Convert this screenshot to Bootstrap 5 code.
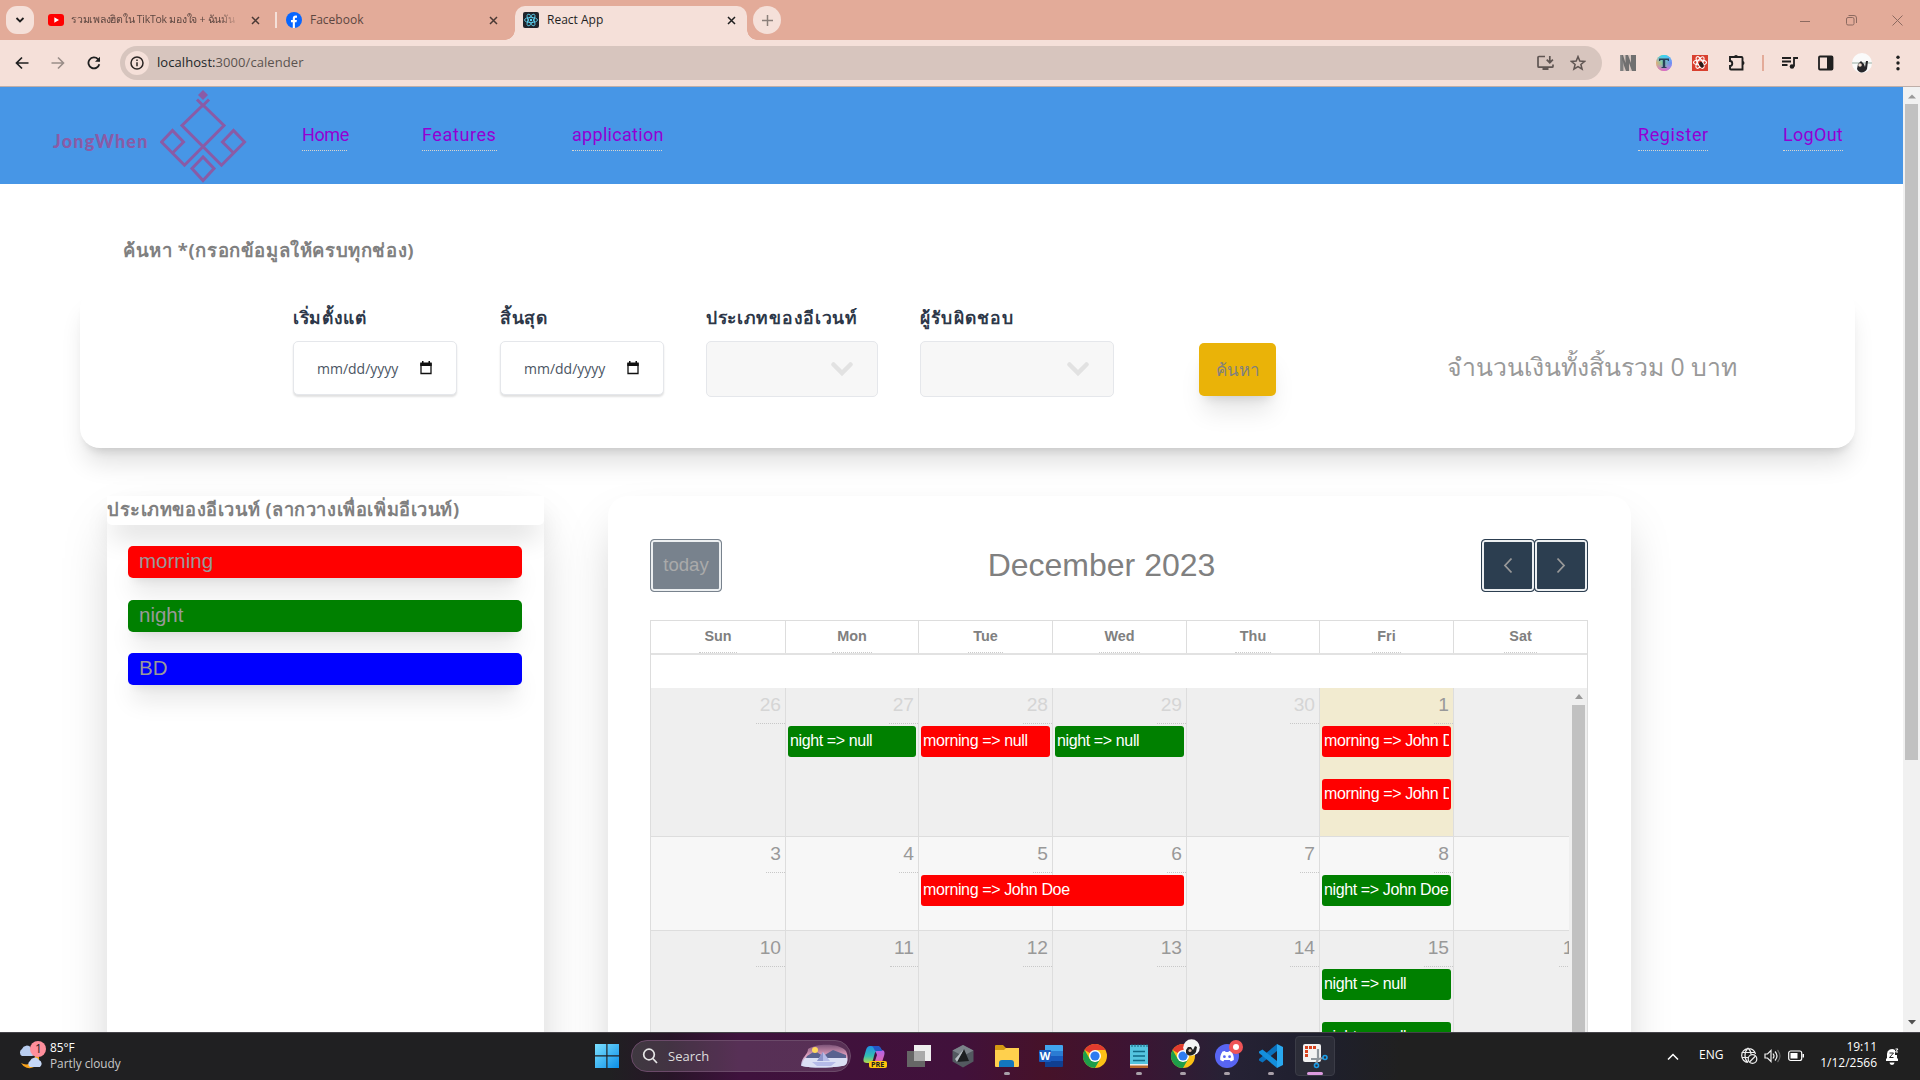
<!DOCTYPE html>
<html lang="th">
<head>
<meta charset="utf-8">
<title>React App</title>
<meta name="viewport" content="width=device-width, initial-scale=1">
<link href="https://cdn.jsdelivr.net/npm/bootstrap@5.3.0/dist/css/bootstrap.min.css" rel="stylesheet">
<style>
:root{--ui:"Open Sans","Noto Sans",sans-serif;--arial:"Liberation Sans",sans-serif}
html,body{height:1080px;overflow:hidden}
body{width:1920px;font-family:var(--ui);color:#808080;background:#fff}
svg{display:block;flex:none}
/* browser frame */
.tabstrip{height:40px;background:#e3ab99;font-size:12px;color:#5c4640}
.tab-menu,.tab-plus{width:28px;height:28px;border-radius:11px;background:#f5e0d9}
.tab-plus{border-radius:14px;margin-left:6px}
.tab-menu{margin-left:6px}
.tab-item{height:34px;white-space:nowrap}
.tab-one{width:241px;padding-left:14px}
.tab-one span{width:168px;overflow:hidden;margin-left:7px;font-size:10.5px;letter-spacing:-.25px;-webkit-mask-image:linear-gradient(90deg,#000 88%,transparent)}
.tab-two{width:240px;padding-left:9px;border-left:2px solid #f5e0d9;height:16px}
.tab-live{width:232px;height:34px;padding:0 11px 6px 8px;border-radius:10px 10px 0 0;background:#f5e0d9;color:#1f1f1f;margin-top:6px;position:relative}
.tab-live:before,.tab-live:after{content:"";position:absolute;bottom:0;width:10px;height:10px}
.tab-live:before{left:-10px;background:radial-gradient(circle at 0 0,transparent 9.5px,#f5e0d9 10px)}
.tab-live:after{right:-10px;background:radial-gradient(circle at 100% 0,transparent 9.5px,#f5e0d9 10px)}
.win-ctl{gap:35px;margin-right:17px}
.toolbar{height:47px;background:#f5e0d9;border-bottom:1px solid #bfaea8;padding:0 15px}
.omnibox{width:1482px;height:34px;border-radius:17px;background:#d7c5be;margin-left:19px;font-size:13px;color:#5b534f;padding:0 16px 0 5px}
.site-info{width:24px;height:24px;border-radius:12px;background:#f5e0d9}
.tool-gap{gap:20px;margin-left:18px}
/* application */
.viewport-area{height:945px;overflow:hidden}
.page-area{width:1903px;height:945px;overflow:hidden}
.topnav{height:97px;background:#4796e6;padding:0 60px 0 53px;font-family:"Roboto",sans-serif}
.brand-name{font:900 18px "Lato",sans-serif;letter-spacing:1.2px;color:#8a5ba6;width:107px;padding-top:11px}
.topnav a{color:#9400d3;text-decoration:none;font-size:18px;line-height:24px;letter-spacing:.6px;border-bottom:1px dotted #d9d6cf;padding-bottom:3px;margin-top:3px;white-space:nowrap}
.topnav .nav-tight{letter-spacing:-.4px}.topnav .nav-mid{letter-spacing:.3px}
.find-title{font-weight:700;font-size:18.5px;letter-spacing:.6px;line-height:26px;margin:53px 0 0 123px}
.find-card{width:1775px;height:159px;margin:26px 0 0 80px;border-radius:20px;background:#fff;padding:14px 0 0 213px;box-shadow:0 20px 25px -5px rgba(0,0,0,.12),0 8px 10px -6px rgba(0,0,0,.14)}
.find-label{color:#2d3748;font-weight:600;font-size:17.5px;letter-spacing:.7px;line-height:28px;margin-bottom:10px;white-space:nowrap}
.date-box{width:164px;height:54px;border:1px solid #e5e7eb;border-radius:5px;background:#fff;color:#4b5563;font-size:14px;padding:0 24px 0 23px;box-shadow:0 2px 2px rgba(0,0,0,.12)}
.pick-box{height:56px;border:1px solid #e5e7eb;border-radius:5px;background:#f7f7f7;padding-right:24px}
.find-btn{width:77px;height:53px;border-radius:5px;background:#eab308;color:#808080;font-size:17px;margin:40px 0 0 85px;padding:0;border:0;box-shadow:0 20px 25px -5px rgba(0,0,0,.1),0 8px 10px -6px rgba(0,0,0,.12)}
.find-total{font-size:24.8px;color:#999;margin:43px 0 0 171px;line-height:40px;white-space:nowrap}
.lower{margin:48px 0 0 107px;gap:64px}
.soft{box-shadow:0 25px 50px -12px rgba(0,0,0,.25)}
.kind-panel{width:437px;height:760px;background:#fff}
.kind-head{height:29px;border-radius:0 0 5px 5px;background:#fff;font-weight:700;font-size:18.2px;letter-spacing:.58px;line-height:27px;white-space:nowrap;box-shadow:0 16px 28px -6px rgba(0,0,0,.18)}
.kind-list{padding:21px 22px 0 21px}
.kind-item{height:32px;margin-bottom:21.6px;border-radius:5px;padding-left:11px;font:20.5px/29px var(--arial);color:#999;box-shadow:0 20px 25px -5px rgba(0,0,0,.1),0 8px 10px -6px rgba(0,0,0,.1)}
.bg-red{background:red}.bg-green{background:green}.bg-blue{background:blue}
.cal-card{width:1023px;height:900px;background:#fff;border-radius:20px;padding:43px 43px 0 42px;font-family:var(--arial)}
.cal-btn{height:53px;border:1px solid #2c3e50;border-radius:4px;background:#2c3e50;box-shadow:inset 0 0 0 2px #eceff1;width:54px}
.cal-btn.faded{width:72px;background:#78828d;border-color:#78828d;color:#aaa;font-size:18.6px;padding-bottom:2px}
.cal-title{font-size:32px;line-height:38px;color:#808080;padding-bottom:2px}
.cal-frame{margin-top:28px;border:1px solid #ddd;height:800px;width:938px}
.cal-row{display:grid;grid-template-columns:135px 133px 134px 134px 133px 134px 133px}
.cal-head{height:34px;border-bottom:2px solid #e2e2e2;font-weight:700;font-size:14.4px;text-align:center}
.cal-head>div{border-right:1px solid #ddd;height:32px}
.cal-head>div:last-child{border:0}
.cal-head span{display:inline-block;padding:0 5px;height:32px;line-height:31px;border-bottom:1px dotted #ccc}
.cal-body{width:919px;margin-top:33px;overflow:hidden}
.week{grid-template-columns:135px 133px 134px 134px 133px 134px 134px;width:937px;border-bottom:1px solid #ddd;background:#efefef}
.week-a{height:149px}.week-b{height:94px;background:#f7f7f7}.week-c{height:150px}
.day{border-right:1px solid #ddd;padding:0 2px;font-size:19.2px;line-height:22px;color:#999;min-width:0}
.day:last-child{border:0}
.day b{font-weight:400;display:block;width:fit-content;margin:0 -2px 2px auto;padding:6px 4px 7px;border-bottom:1px dotted #c8c8c8}
.day.out b{color:#d5d5d5}
.day.now{background:#f2ebd0}
.ev{height:31px;border-radius:3px;border:0 solid transparent;border-width:0 2px;margin-bottom:22px;color:#fff;font-size:16px;line-height:29px;letter-spacing:-.38px;white-space:nowrap;overflow:hidden}
.ev-wide{width:263px;position:relative}
.scroll-in{width:18px;background:#efefef;height:700px;margin-top:33px;padding:6px 2px 0 3px}
.scroll-in i{display:block;height:690px;background:#c1c1c1;margin-top:6px}
.scroll-out{width:17px;background:#f1f1f1;padding:7px 2px;height:945px}
.scroll-out i{height:656px;background:#c1c1c1;margin-top:5px;width:13px}
/* taskbar */
.taskbar{height:48px;border-top:1px solid #454349;padding-bottom:1px;color:#fff;font-size:12px;line-height:16px;background:linear-gradient(90deg,#202022 0,#202022 610px,#281528 670px,#3f123d 740px,#41113b 960px,#461229 1045px,#3d1433 1130px,#262235 1230px,#1e1f2d 1320px,#202020 1400px)}
.search-pill{width:220px;height:32px;border-radius:16px;border:1px solid #6b4a69;background:rgba(255,255,255,.13);margin-left:12px;font-size:13.5px;color:#ddd;padding:0 2px 0 10px}
.task-slot{width:40px;height:40px;margin-right:4px;border-radius:4px;padding-top:8px}
.task-slot.live{background:#2c2d38;border:1px solid #3b3c47;padding-top:7px}
.task-slot u{width:6px;height:3px;border-radius:2px;background:#a9a0a9;margin-top:4px}
.task-slot.live u{width:16px;background:#dc9be0}
.weather-text{margin-left:2px;font-size:11.8px;padding-bottom:2px}
.tray span,.tray .clock{padding-bottom:2px}
</style>
</head>
<body>
<header>
<div class="tabstrip d-flex align-items-center">
  <div class="tab-menu d-flex align-items-center justify-content-center"><svg width="10" height="10" viewBox="0 0 10 10"><path d="M1.500 3 5 6.500 8.500 3" fill="none" stroke="#1f1f1f" stroke-width="1.800"/></svg></div>
  <div class="tab-item tab-one d-flex align-items-center"><svg width="16" height="16" viewBox="0 0 16 16"><rect y="2" width="16" height="12" rx="3" fill="#f00"/><path d="M6.300 5.300v5.400L11 8z" fill="#fff"/></svg><span>รวมเพลงฮิตใน TikTok มองใจ + ฉันมัน</span><svg style="margin-left:12px" width="9" height="9" viewBox="0 0 9 9" stroke="#4a3935" stroke-width="1.500"><path d="M1 1l7 7M8 1 1 8"/></svg></div>
  <div class="tab-two d-flex align-items-center"><svg width="16" height="16" viewBox="0 0 16 16"><circle cx="8" cy="8" r="8" fill="#0866ff"/><path d="M6.800 16v-5.700H5V8h1.800V6.500c0-2 1-3 2.900-3 .5 0 1 .1 1.300.2v2h-.9c-.9 0-1.200.4-1.200 1.200V8h2l-.4 2.300H8.900V16z" fill="#fff"/></svg><span class="ms-2 flex-grow-1">Facebook</span><svg style="margin-right:17px" width="9" height="9" viewBox="0 0 9 9" stroke="#4a3935" stroke-width="1.500"><path d="M1 1l7 7M8 1 1 8"/></svg></div>
  <div class="tab-live d-flex align-items-center"><svg width="16" height="16" viewBox="0 0 16 16"><rect width="16" height="16" rx="2" fill="#20232a"/><g fill="none" stroke="#61dafb" stroke-width=".8"><ellipse cx="8" cy="8" rx="6.500" ry="2.600"/><ellipse cx="8" cy="8" rx="6.500" ry="2.600" transform="rotate(60 8 8)"/><ellipse cx="8" cy="8" rx="6.500" ry="2.600" transform="rotate(120 8 8)"/></g><circle cx="8" cy="8" r="1.200" fill="#61dafb"/></svg><span class="ms-2 flex-grow-1">React App</span><svg width="9" height="9" viewBox="0 0 9 9" stroke="#1f1f1f" stroke-width="1.500"><path d="M1 1l7 7M8 1 1 8"/></svg></div>
  <div class="tab-plus d-flex align-items-center justify-content-center"><svg width="11" height="11" viewBox="0 0 11 11" stroke="#8b7f7a" stroke-width="1.500"><path d="M5.500 0v11M0 5.500h11"/></svg></div>
  <div class="win-ctl d-flex align-items-center ms-auto"><svg width="11" height="11" stroke="#8c6a60"><path d="M0 6.500h10"/></svg><svg width="11" height="11" fill="none" stroke="#8c6a60"><rect x=".5" y="2.500" width="7.500" height="7.500" rx="1.500"/><path d="M2.500 .5H8a2.500 2.500 0 0 1 2.500 2.500v5"/></svg><svg width="11" height="11" stroke="#8c6a60"><path d="M.5.5l10 10M10.500.5l-10 10"/></svg></div>
</div>
<div class="toolbar d-flex align-items-center">
  <svg width="14" height="14" viewBox="0 0 14 14" fill="none" stroke="#1f1f1f" stroke-width="1.700"><path d="M13.500 7H1.500M7 1.500 1.500 7 7 12.500"/></svg>
  <svg style="margin-left:22px" width="14" height="14" viewBox="0 0 14 14" fill="none" stroke="#998d88" stroke-width="1.600"><path d="M.5 7h12M7 1.500 12.500 7 7 12.500"/></svg>
  <svg style="margin-left:22px" width="14" height="14" viewBox="0 0 14 14" fill="none" stroke="#1f1f1f" stroke-width="1.800"><path d="M12.300 8.200A5.500 5.500 0 1 1 11 3.200L12.500 5"/><path d="M13 .8v5H8z" fill="#1f1f1f" stroke="none"/></svg>
  <div class="omnibox d-flex align-items-center">
    <div class="site-info d-flex align-items-center justify-content-center"><svg width="14" height="14" viewBox="0 0 14 14" fill="none" stroke="#2b2523" stroke-width="1.500"><circle cx="7" cy="7" r="6"/><path d="M7 6.200v4M7 3.500V5"/></svg></div>
    <span class="ms-2 flex-grow-1" style="letter-spacing:.07px"><span class="text-dark">localhost:</span>3000/calender</span>
    <svg class="me-3" width="17" height="16" viewBox="0 0 17 16" fill="none" stroke="#5f5552" stroke-width="1.700"><path d="M8 1.500H2a1 1 0 0 0-1 1v8.700a1 1 0 0 0 1 1h13a1 1 0 0 0 1-1V9.500M12.800 1v6.500M9.700 4.700l3.100 3 3.100-3"/><path d="M5.500 12.500h6V15h-6z" fill="#5f5552" stroke="none"/></svg>
    <svg width="16" height="16" viewBox="0 0 16 16" fill="none" stroke="#5f5552" stroke-width="1.500"><path d="m8 1.600 1.800 4.500 4.800.3-3.700 3.100 1.200 4.700L8 11.600l-4.100 2.600 1.200-4.700L1.400 6.400l4.800-.3z"/></svg>
  </div>
  <div class="tool-gap d-flex align-items-center">
    <svg width="16" height="16" viewBox="0 0 16 16"><path d="M0 0h16v16H0z" fill="#d5c6c0"/><path d="M0 0h3l2.500 8V0H8l3 8V0h5v16h-4L9 8v8H6L3 8v8H0z" fill="#707070"/><path d="M0 0h1.500v16H0zM2.500 5l1 3v8h-1z" fill="#8d8d8d"/></svg>
    <svg width="16" height="16" viewBox="0 0 16 16"><defs><linearGradient id="hueA"><stop stop-color="#ffb238"/><stop offset=".4" stop-color="#6de06a"/><stop offset="1" stop-color="#4d7bff"/></linearGradient><linearGradient id="hueB" x1="0" y1="0" x2="0" y2="1"><stop stop-color="#28d7ff"/><stop offset=".5" stop-color="#a8a0ff" stop-opacity=".3"/><stop offset="1" stop-color="#f45ac8"/></linearGradient></defs><circle cx="8" cy="8" r="8" fill="url(#hueA)"/><circle cx="8" cy="8" r="8" fill="url(#hueB)"/><path d="M3 3.500h10V6h-1l-.5-1H9.200v7h1.300v1h-5v-1h1.300V5H4.500L4 6H3z" fill="#28405a"/></svg>
    <svg width="16" height="16" viewBox="0 0 16 16"><path fill="#d9402f" d="M0 0h16v16H0z"/><g fill="none" stroke="#fff" stroke-width="1.100"><ellipse cx="8" cy="7.500" rx="6.500" ry="2.500"/><ellipse cx="8" cy="7.500" rx="6.500" ry="2.500" transform="rotate(60 8 7.500)"/><ellipse cx="8" cy="7.500" rx="6.500" ry="2.500" transform="rotate(120 8 7.500)"/></g><ellipse cx="9.500" cy="10" rx="2" ry="3" fill="#2b1a18" transform="rotate(-30 9 10)"/></svg>
    <svg width="17" height="16" viewBox="0 0 17 16" fill="none" stroke="#1f1f1f" stroke-width="1.900"><path d="M2 2h11.500a1 1 0 0 1 1 1v11.500H3a1 1 0 0 1-1-1V11c3 0 3-5 0-5V3z"/><path d="M6 2a2 2 0 0 1 4 0zM14.500 6a2 2 0 0 1 0 4z" fill="#1f1f1f" stroke="none"/></svg>
    <i style="width:2px;height:16px;background:#e3ab99;margin-left:-3px"></i>
    <svg style="margin-left:-2px" width="17" height="16" viewBox="0 0 17 16" fill="none" stroke="#1f1f1f" stroke-width="1.800"><path d="M0 3h9M0 6.500h9M0 10h5.500M16 3h-4v8.500"/><circle cx="10" cy="11.500" r="2.300" fill="#1f1f1f" stroke="none"/></svg>
    <svg style="margin-left:-1px" width="16" height="16" viewBox="0 0 16 16"><rect x="1" y="1.500" width="13.500" height="13" rx="1" fill="none" stroke="#1f1f1f" stroke-width="1.800"/><path d="M9 1h5.500v14H9z" fill="#1f1f1f"/></svg>
    <svg style="margin-left:-2px" width="20" height="20" viewBox="0 0 20 20"><circle cx="10" cy="10" r="10" fill="#fafafa"/><path d="M0 9h20v2H0z" fill="#c9d3cd"/><path d="M5 16l1-5 3-3 3 3 1 3 1-6h2l-1 8c-2 4-8 5-10 0z" fill="#26262a"/><circle cx="8" cy="12" r="1.800" fill="#f0ddd0"/></svg>
    <svg style="margin-left:4px" width="4" height="16" fill="#1f1f1f"><circle cx="2" cy="2.200" r="1.700"/><circle cx="2" cy="8" r="1.700"/><circle cx="2" cy="13.800" r="1.700"/></svg>
  </div>
</div>
</header>
<div class="viewport-area d-flex">
<div class="page-area">
  <nav class="topnav d-flex align-items-center">
    <div class="brand-name">JongWhen</div>
    <svg style="margin-top:1px" width="87" height="93" viewBox="160.500 90 87 93" fill="none" stroke="#8a5ba6" stroke-width="3"><path d="M203.500 90l5 5-5 5-5-5z" fill="#8a5ba6" stroke="none"/><path d="M197.500 99.500l6 6 6-6M203.500 105l-21 20.500L222 165.200 245 142 234 130.500 223 142l11.500 11.500M203.500 105l21 20.500L185 165.200 162 142l11-11.500L184 142l-11.500 11.500M203.500 157l-11 11.500 11 12 11-12z"/></svg>
    <a href="#" class="nav-tight" style="margin-left:55px;width:45px">Home</a><a href="#" style="margin-left:75px;width:75px">Features</a><a href="#" class="nav-mid" style="margin-left:75px;width:90px">application</a>
    <a href="#" class="ms-auto" style="width:70px">Register</a><a href="#" class="nav-mid" style="margin-left:75px;width:60px">LogOut</a>
  </nav>
  <div class="find-title">ค้นหา *(กรอกข้อมูลให้ครบทุกช่อง)</div>
  <section class="find-card d-flex align-items-start">
    <div style="width:207px"><div class="find-label">เริ่มตั้งแต่</div><div class="date-box d-flex align-items-center justify-content-between">mm/dd/yyyy<svg width="12" height="14" viewBox="0 0 12 14"><path d="M1 3h10v9.500H1z" fill="none" stroke="#111" stroke-width="1.300"/><path d="M.3 1.500h11.400V5H.3zM2 0h1.500v2H2zM8.500 0H10v2H8.500z" fill="#111"/></svg></div></div>
    <div style="width:206px"><div class="find-label">สิ้นสุด</div><div class="date-box d-flex align-items-center justify-content-between">mm/dd/yyyy<svg width="12" height="14" viewBox="0 0 12 14"><path d="M1 3h10v9.500H1z" fill="none" stroke="#111" stroke-width="1.300"/><path d="M.3 1.500h11.400V5H.3zM2 0h1.500v2H2zM8.500 0H10v2H8.500z" fill="#111"/></svg></div></div>
    <div style="width:214px"><div class="find-label">ประเภทของอีเวนท์</div><div class="pick-box d-flex align-items-center justify-content-end" style="width:172px"><svg width="22" height="15" viewBox="0 0 22 15"><path d="M2.500 2.500 11 11l8.500-8.500" fill="none" stroke="#e2e2e2" stroke-width="4.500" stroke-linecap="round"/></svg></div></div>
    <div style="width:194px"><div class="find-label" style="letter-spacing:1.2px">ผู้รับผิดชอบ</div><div class="pick-box d-flex align-items-center justify-content-end"><svg width="22" height="15" viewBox="0 0 22 15"><path d="M2.500 2.500 11 11l8.500-8.500" fill="none" stroke="#e2e2e2" stroke-width="4.500" stroke-linecap="round"/></svg></div></div>
    <button class="find-btn">ค้นหา</button>
    <div class="find-total">จำนวนเงินทั้งสิ้นรวม 0 บาท</div>
  </section>
  <div class="lower d-flex">
    <aside class="kind-panel soft">
      <div class="kind-head">ประเภทของอีเวนท์ (ลากวางเพื่อเพิ่มอีเวนท์)</div>
      <div class="kind-list"><div class="kind-item bg-red">morning</div><div class="kind-item bg-green">night</div><div class="kind-item bg-blue">BD</div></div>
    </aside>
    <main class="cal-card soft">
      <div class="d-flex align-items-center justify-content-between">
        <div class="cal-btn faded d-flex align-items-center justify-content-center">today</div>
        <div class="cal-title">December 2023</div>
        <div class="d-flex"><div class="cal-btn d-flex align-items-center justify-content-center"><svg width="10" height="17" fill="none" stroke="#999" stroke-width="1.800"><path d="M8.500 1.500 2 8.500l6.500 7"/></svg></div><div class="cal-btn d-flex align-items-center justify-content-center" style="margin-left:-1px"><svg width="10" height="17" fill="none" stroke="#999" stroke-width="1.800"><path d="M1.500 1.500 8 8.500l-6.500 7"/></svg></div></div>
      </div>
      <div class="cal-frame">
        <div class="cal-row cal-head"><div><span>Sun</span></div><div><span>Mon</span></div><div><span>Tue</span></div><div><span>Wed</span></div><div><span>Thu</span></div><div><span>Fri</span></div><div><span>Sat</span></div></div>
        <div class="d-flex">
        <div class="cal-body">
          <div class="cal-row week week-a">
            <div class="day out"><b>26</b></div>
            <div class="day out"><b>27</b><div class="ev bg-green">night =&gt; null</div></div>
            <div class="day out"><b>28</b><div class="ev bg-red">morning =&gt; null</div></div>
            <div class="day out"><b>29</b><div class="ev bg-green">night =&gt; null</div></div>
            <div class="day out"><b>30</b></div>
            <div class="day now"><b>1</b><div class="ev bg-red">morning =&gt; John Doe</div><div class="ev bg-red">morning =&gt; John Doe</div></div>
            <div class="day"><b>2</b></div>
          </div>
          <div class="cal-row week week-b">
            <div class="day"><b>3</b></div><div class="day"><b>4</b></div>
            <div class="day"><b>5</b><div class="ev ev-wide bg-red">morning =&gt; John Doe</div></div>
            <div class="day"><b>6</b></div><div class="day"><b>7</b></div>
            <div class="day"><b>8</b><div class="ev bg-green">night =&gt; John Doe</div></div>
            <div class="day"><b>9</b></div>
          </div>
          <div class="cal-row week week-c">
            <div class="day"><b>10</b></div><div class="day"><b>11</b></div><div class="day"><b>12</b></div><div class="day"><b>13</b></div><div class="day"><b>14</b></div>
            <div class="day"><b>15</b><div class="ev bg-green">night =&gt; null</div><div class="ev bg-green">night =&gt; null</div></div>
            <div class="day"><b>16</b></div>
          </div>
        </div>
        <div class="scroll-in"><svg class="mx-auto" width="8" height="5"><path d="M0 5 4 0l4 5z" fill="#999"/></svg><i></i></div>
        </div>
      </div>
    </main>
  </div>
</div>
<div class="scroll-out d-flex flex-column align-items-center"><svg width="8" height="5"><path d="M0 4.500 4 .5l4 4z" fill="#999"/></svg><i></i><svg class="mt-auto" width="8" height="5"><path d="M0 0h8L4 4.500z" fill="#505050"/></svg></div>
</div>
<footer class="taskbar d-flex align-items-center">
  <div class="d-flex align-items-center" style="width:595px;padding-left:18px">
    <svg width="30" height="30" viewBox="0 0 30 30"><path d="M20 13a9 9 0 1 1-17 9c7 4 15-1 14-9z" fill="#f7a11b"/><path d="M4 15a4 4 0 0 1 0-7 5 5 0 0 1 9-1 4 4 0 0 1 1 8z" fill="#b9cdf0"/><path d="M12 26a3.500 3.500 0 0 1 0-6 5 5 0 0 1 9-1 4 4 0 0 1 1 7z" fill="#c5d7f6"/><circle cx="20" cy="8" r="8" fill="#ff8f9c"/><text x="17" y="12.300" font-size="12" fill="#222" font-family="Open Sans">1</text></svg>
    <div class="weather-text"><div>85°F</div><div style="color:#c9c9c9">Partly cloudy</div></div>
  </div>
  <svg width="24" height="24" viewBox="0 0 24 24"><defs><linearGradient id="win" gradientUnits="userSpaceOnUse" x1="0" y1="0" x2="24" y2="24"><stop stop-color="#7be0ff"/><stop offset="1" stop-color="#0b8fe8"/></linearGradient></defs><path d="M0 0h11.300v11.300H0zM12.500 0H24v11.300H12.500zM0 12.500h11.300V24H0zM12.500 12.500H24V24H12.500z" fill="url(#win)"/></svg>
  <div class="search-pill d-flex align-items-center"><svg width="16" height="16" viewBox="0 0 16 16" fill="none" stroke="#e6e6e6" stroke-width="1.700"><circle cx="7" cy="6.500" r="5.300"/><path d="M10.800 10.500 15 15"/></svg><span class="flex-grow-1" style="margin-left:10px;padding-bottom:1px;font-size:13px">Search</span><svg width="48" height="24" viewBox="0 0 48 24"><defs><linearGradient id="sky" x1="0" y1="0" x2="0" y2="1"><stop stop-color="#7d5479"/><stop offset=".45" stop-color="#dc9dba"/><stop offset="1" stop-color="#bcd0f2"/></linearGradient></defs><path d="M1 21C2 12 8 11 8 5c9-6 32-6 38 2 3 6 2 15-4 15-14 2-30 2-40 0-1 0-1-.5-1-1z" fill="url(#sky)"/><path d="M7 12l8-5 8 5 10-6 13 5v3H6z" fill="#59628f"/><path d="M5 14h42c1 5-1 8-5 8-14 2-30 2-40 0 0-3 1-6 3-8z" fill="#dbe0f4"/><circle cx="15" cy="6" r="3" fill="#ffd95e"/><path d="M23 8l7 9H17zM12 18h24l-5 4H17z" fill="#b5bbe8"/><path d="M23 8l-6 9h6z" fill="#8d94ca"/></svg></div>
  <div class="d-flex" style="margin-left:4px">
    <div class="task-slot d-flex flex-column align-items-center"><svg width="24" height="24" viewBox="0 0 24 24"><defs><linearGradient id="copA" x1="0" y1="0" x2="0" y2="1"><stop stop-color="#1f8fe6"/><stop offset=".6" stop-color="#35bfb0"/><stop offset="1" stop-color="#b8d84a"/></linearGradient><linearGradient id="copB" x1="0" y1="0" x2="0" y2="1"><stop stop-color="#b065ee"/><stop offset="1" stop-color="#f2668f"/></linearGradient></defs><path d="M12 6h6c4 0 4 3 3 6l-2 6c-1 3-3 4-6 4H8c3 0 3-2 4-5l2-6z" fill="url(#copB)"/><path d="M7 2h7c3 0 4 2 5 5h-4c-3 0-3 2-4 5l-1 4c-1 2-2 3-4 3H4c-4 0-4-3-3-6l2-7c1-3 2-4 4-4z" fill="url(#copA)"/><path d="M8 2h6c3 0 4 2 5 5h-6c-2 0-2-5-5-5z" fill="#2456c8"/><rect x="6" y="17" width="18" height="7" rx="2" fill="#ffc60a"/><text x="8" y="23.300" font-size="7.200" font-weight="700" fill="#222" font-family="Open Sans">PRE</text></svg></div>
    <div class="task-slot d-flex flex-column align-items-center"><svg width="24" height="24"><path d="M7 1h17v16H7z" fill="#eee"/><path d="M0 7h18v16H0z" fill="#666"/><path d="M7 7h11v10H7z" fill="#aaa"/></svg></div>
    <div class="task-slot d-flex flex-column align-items-center"><svg width="24" height="24" viewBox="0 0 24 24"><path d="M12 1l10.500 5.500v11L12 23.500l-10.500-6v-11z" fill="#535960"/><path d="M12 1l10.500 5.500L12 12 1.500 6.500z" fill="#7c838a"/><path d="M13 5l5 12-12 1z" fill="#1c1e20"/><path d="M13 5 6 18l-2-3z" fill="#b7bdc2"/></svg></div>
    <div class="task-slot d-flex flex-column align-items-center"><svg width="24" height="24"><path d="M0 2q0-1 1-1h7l3 3h12q1 0 1 1v5H0z" fill="#d49a12"/><path d="M0 6h9l2-2h13v18q0 1-1 1H1q-1 0-1-1z" fill="#ffd04d"/><path d="M4 23v-4q0-3 3-3h9q3 0 3 3v4z" fill="#1377bd"/></svg><u></u></div>
    <div class="task-slot d-flex flex-column align-items-center"><svg width="24" height="24"><path d="M6 1h17q1 0 1 1v5H6z" fill="#41a5ee"/><path d="M6 7h18v5H6z" fill="#2b7cd3"/><path d="M6 12h18v5H6z" fill="#185abd"/><path d="M6 17h18v5q0 1-1 1H6z" fill="#103f91"/><rect y="6" width="12" height="12" rx="1" fill="#185abd"/><text x=".7" y="16" font-size="11" font-weight="700" fill="#fff" font-family="Open Sans">W</text></svg></div>
    <div class="task-slot d-flex flex-column align-items-center"><svg width="24" height="24" viewBox="0 0 24 24"><g id="chromeMark"><circle cx="12" cy="12" r="12" fill="#fbc116"/><path d="M1.600 6A12 12 0 0 1 22.400 6H12v6z" fill="#e33b2e"/><path d="M1.600 6 6.800 15l5.200 3-0 6A12 12 0 0 1 1.600 6z" fill="#1e9e4a"/><path d="M12 24l5.200-9-5.200 3-5-3z" fill="#1e9e4a"/><circle cx="12" cy="12" r="6" fill="#fff"/><circle cx="12" cy="12" r="4.600" fill="#2e7cf0"/></g></svg></div>
    <div class="task-slot d-flex flex-column align-items-center"><svg width="24" height="24"><path d="M3 1h18v20H3z" fill="#55c5e0"/><path d="M3 21h18v3H3z" fill="#b8672b"/><path d="M3 20h18v1.500H3z" fill="#eee"/><path d="M6 7.500h12M6 12h12M6 16.500h12" stroke="#106a86" stroke-width="1.600"/><path d="M5 0v3M8 0v3M11 0v3M14 0v3M17 0v3M20 0v3" stroke="#17637c"/></svg><u></u></div>
    <div class="task-slot d-flex flex-column align-items-center"><svg width="24" height="24" viewBox="0 0 24 24" overflow="visible"><use href="#chromeMark"/><circle cx="20.500" cy="3.500" r="8.300" fill="#f5f5f5"/><path d="M15 6l2-3h3l2 3 2-4 2 1-1 5c-2 4-8 5-10 1z" fill="#222"/><circle cx="19" cy="6.500" r="1.600" fill="#d9b6a2"/></svg><u></u></div>
    <div class="task-slot d-flex flex-column align-items-center"><svg width="24" height="24" viewBox="0 0 24 24" overflow="visible"><circle cx="12" cy="12" r="12" fill="#5865f2"/><path d="M7.500 7.500 10 7l.6 1h2.800l.6-1 2.500.5c2 3 2.500 5.500 2.300 8.500l-3 1.500-1-1.500H9.200l-1 1.500-3-1.500c-.2-3 .3-5.500 2.300-8.500z" fill="#fff"/><circle cx="9.400" cy="12.700" r="1.400" fill="#5865f2"/><circle cx="14.600" cy="12.700" r="1.400" fill="#5865f2"/><circle cx="21" cy="3" r="7" fill="#ef5457"/><circle cx="21" cy="3" r="3" fill="#fff"/></svg><u></u></div>
    <div class="task-slot d-flex flex-column align-items-center"><svg width="24" height="24"><path d="M18 0l6 3v18l-6 3z" fill="#29a8f0"/><path d="M18 0v7L3.500 18.500 0 16.500V15z" fill="#0a72bf"/><path d="M18 24v-7L3.500 5.500 0 7.500V9z" fill="#148fdc"/></svg><u></u></div>
    <div class="task-slot live d-flex flex-column align-items-center"><svg width="24" height="24" overflow="visible"><rect width="18" height="18" rx="2" fill="#f2f2f2"/><path d="M3.500 13V3.500H14" fill="none" stroke="#d8431f" stroke-width="3" stroke-dasharray="3 1"/><path d="M15 5v10l-2 5M8 15h8l4-1" stroke="#8f969c" stroke-width="2.200" fill="none"/><circle cx="13.500" cy="21.500" r="2" fill="none" stroke="#1b9de8" stroke-width="1.600"/><circle cx="22" cy="13.500" r="2" fill="none" stroke="#1b9de8" stroke-width="1.600"/></svg><u></u></div>
  </div>
  <div class="tray d-flex align-items-center ms-auto" style="margin-right:21px">
    <svg width="12" height="7" fill="none" stroke="#fff" stroke-width="1.500"><path d="M1 6.500l5-5 5 5"/></svg>
    <span style="margin-left:20px;width:41px">ENG</span>
    <svg width="18" height="18" viewBox="0 0 18 18" fill="none" stroke="#eee" stroke-width="1.200"><path d="M15.500 7A7 7 0 1 0 8 15.500M1.500 5.500h13M1.500 10.500H8M8 1C4 5 4 12 8 15.500M8 1c2 2 3 4 3 6"/><circle cx="12.500" cy="12" r="4.300"/><path d="M9.500 15l6-6"/></svg>
    <svg style="margin-left:6px" width="17" height="14" viewBox="0 0 17 14" fill="none" stroke="#eee" stroke-width="1.200"><path d="M1 5h2.500L7 1.500v11L3.500 9H1z"/><path d="M9 4.500q2 2.500 0 5M11 2.500q4 4.500 0 9"/><path d="M13.500 1q5 6 0 12" stroke="#666"/></svg>
    <svg style="margin-left:7px" width="17" height="12"><rect x=".7" y="1" width="13" height="9.500" rx="2" fill="none" stroke="#fff" stroke-width="1.200"/><path d="M2.500 3h7v5.500h-7zM14.500 4H16v3.500h-1.500z" fill="#fff"/></svg>
    <div class="clock text-end" style="width:72px">19:11<br>1/12/2566</div>
    <svg style="margin-left:8px" width="14" height="17" viewBox="0 0 14 17"><path d="M1 13V11l1-1V6a5 5 0 0 1 8-4v5h2v3l1 1v2zM4.500 14.500h5a2.500 2.500 0 0 1-5 0z" fill="#fff"/><path d="M4.500 5h4l-4 4.500h4" stroke="#222" fill="none"/><path d="M10.500 1H13l-2.500 3H13" stroke="#fff" fill="none"/></svg>
  </div>
</footer>
<script src="https://cdn.jsdelivr.net/npm/bootstrap@5.3.0/dist/js/bootstrap.bundle.min.js"></script>
</body>
</html>
